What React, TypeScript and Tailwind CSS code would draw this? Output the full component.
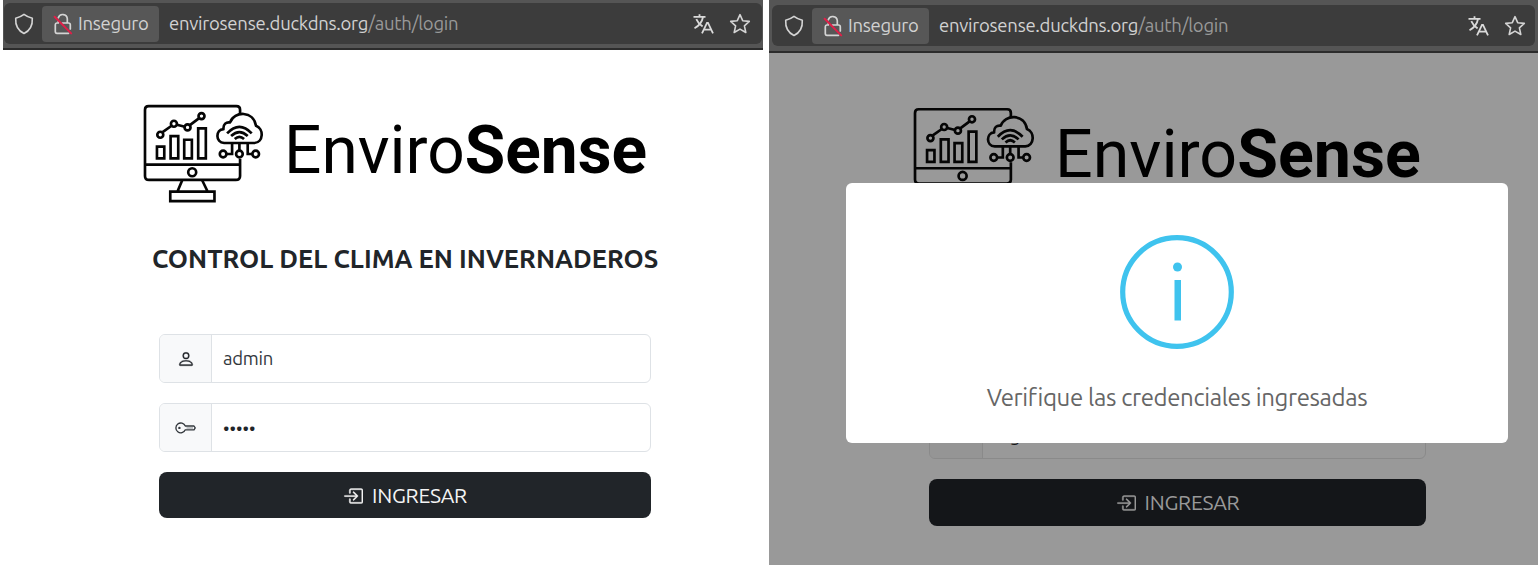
import React from "react";
import { BsPerson, BsBoxArrowInRight } from "react-icons/bs";

const ubuntu = "font-['Ubuntu','Noto_Sans',sans-serif]";

function Shield() {
  return (
    <svg viewBox="0 0 20 22" className="h-[22px] w-5 shrink-0" fill="none" stroke="#d4d4d4" strokeWidth="1.6" strokeLinejoin="round">
      <path d="M10 1.300C8 2.800 5 4.400 1.700 5.200C1.300 11.500 3.600 17.300 10 20.500C16.400 17.300 18.700 11.500 18.300 5.200C15 4.400 12 2.800 10 1.300Z" />
    </svg>
  );
}

function BrokenLock() {
  return (
    <svg viewBox="0 0 20 22" className="h-[22px] w-5 shrink-0" fill="none" strokeLinecap="round">
      <path d="M5.300 4.800A4.600 4.600 0 0 1 14.300 5.800V10M9.500 10H15.500Q17.300 10 17.300 11.800V16M3.800 10Q2.300 10.200 2.300 11.800V18.600Q2.300 20.300 4 20.300H15.500M5.300 10V8" stroke="#d4d4d4" strokeWidth="1.700" />
      <path d="M1.600 3.800L18.200 20.400" stroke="#e01f48" strokeWidth="2" />
    </svg>
  );
}

function Translate() {
  return (
    <svg viewBox="0 0 21 20" className="mr-[15px] h-5 w-[21px] shrink-0" fill="none" stroke="#dadada" strokeWidth="1.800">
      <path d="M0.500 2.900H12.500M6.500 0.300V2.900M10 3C9.200 7.500 6 11.800 1.500 14.300M3.300 5.200C4.600 8.300 7 10.900 9.600 12.400" />
      <path d="M9 19.300L14 8.900H15L20 19.300M11 15.700H18" />
    </svg>
  );
}

function Star() {
  return (
    <svg viewBox="0 0 22 22" className="h-[22px] w-[22px] shrink-0" fill="none" stroke="#d4d4d4" strokeWidth="1.600" strokeLinejoin="round">
      <path d="M11 1.700L13.700 7.700L20.300 8.400L15.400 12.800L16.800 19.500L11 16.100L5.200 19.500L6.600 12.800L1.700 8.400L8.300 7.700Z" />
    </svg>
  );
}

function Key() {
  return (
    <svg viewBox="0 0 21 12" className="h-3 w-[21px] shrink-0" fill="none" stroke="#33383d" strokeWidth="1.350" strokeLinejoin="round">
      <path d="M10.300 4H19L20.200 5.900L19 7.800H10.300A4.900 4.900 0 1 1 10.300 4Z" />
      <path d="M11.500 6H18" strokeWidth="1" stroke="#8b8f93" />
      <circle cx="4.400" cy="5.900" r="1.200" fill="#33383d" stroke="none" />
    </svg>
  );
}

function AddressBar({ className, field }: { className: string; field: string }) {
  return (
    <div className={`w-full border-b-2 border-[#2c2c2c] bg-[#555555] ${className}`}>
      <div className={`flex items-center rounded-md bg-[#3c3c3c] ${field} ${ubuntu}`}>
        <Shield />
        <div className="ml-2 flex h-[36px] w-[117px] shrink-0 items-center rounded bg-[#575757] pl-[11px]">
          <BrokenLock />
          <span className="ml-[5px] text-[18.5px] tracking-[-0.25px] text-[#d2d2d2]">Inseguro</span>
        </div>
        <div className="ml-[10px] grow whitespace-nowrap text-[18.5px] tracking-[-0.25px] text-[#d2d2d2]">
          envirosense.duckdns.org<span className="text-[#999999]">/auth/login</span>
        </div>
        <Translate />
        <Star />
      </div>
    </div>
  );
}

function MonitorLogo({ className }: { className: string }) {
  return (
    <svg viewBox="39 42 364 297" className={className} fill="none" stroke="#050505" strokeWidth="8">
      <path d="M331 72V59Q331 48 320 48H56Q45 48 45 59V258Q45 270 57 270H318Q331 270 331 258V206M45 224H331" />
      <circle cx="187" cy="247" r="12" />
      <path d="M157 271L143 304M217 271L233 304M121 305H254V334H121Z" />
      <path d="M81 170H103V205H81ZM122 138H145V205H122ZM163 149H186V205H163ZM205 115H228V205H205Z" />
      <path d="M98 126L125 107M141 104L165 110M180 105L208 84" />
      <circle cx="91" cy="134" r="9" />
      <circle cx="132" cy="101" r="9" />
      <circle cx="173" cy="112" r="9" />
      <circle cx="215" cy="78" r="9" />
      <path d="M283 159C256 157 257 119 281 117C280 102 289 95 301 97C313 62 372 61 379 107C403 116 402 157 374 159Z" strokeLinejoin="round" />
      <path d="M292 130Q329 91 366 130M304 138Q329 114 354 138M315 147Q329 134 343 147" />
      <path d="M329 160V181M307 160V192H290M354 160V192H368" />
      <circle cx="280" cy="192" r="10" />
      <circle cx="329" cy="192" r="10" />
      <circle cx="378" cy="192" r="10" />
    </svg>
  );
}

function Brand({ className, icon, text }: { className: string; icon: string; text: string }) {
  return (
    <div className={`flex ${className}`}>
      <MonitorLogo className={`shrink-0 ${icon}`} />
      <div className={`whitespace-nowrap font-['Roboto',sans-serif] text-black ${text}`}>
        Enviro<span className="font-bold">Sense</span>
      </div>
    </div>
  );
}

function Field({ className, icon, children }: { className: string; icon: React.ReactNode; children: React.ReactNode }) {
  return (
    <div className={`flex overflow-hidden rounded-md border ${className}`}>
      <div className="flex w-[52px] shrink-0 items-center justify-center border-r border-inherit bg-[#f8f9fa] text-[#212529]">{icon}</div>
      <div className="flex grow items-center pl-[11px] text-[18.5px] tracking-[-0.25px]">{children}</div>
    </div>
  );
}

function SubmitButton({ className }: { className: string }) {
  return (
    <button type="button" className={`mt-5 flex w-full items-center justify-center gap-[9px] rounded-lg text-[21px] ${className}`}>
      <BsBoxArrowInRight className="h-5 w-5 stroke-current stroke-[0.3]" />
      <span className="tracking-[-0.250px]">INGRESAR</span>
    </button>
  );
}

function LoginView() {
  return (
    <section className="ml-[3px] flex h-[568px] w-[760px] flex-col bg-white">
      <AddressBar className="h-[50px] px-px pt-[3px]" field="h-[41px] pl-[10px] pr-[11px]" />
      <div className={`pl-[140px] pt-[54px] ${ubuntu}`}>
        <Brand className="h-[100px]" icon="h-[99px] w-[121px]" text="ml-[20px] mt-[14px] text-[65.8px] leading-[66px]" />
        <h1 className="ml-[9px] mt-[35px] whitespace-nowrap text-[25.65px] font-semibold leading-[40px] text-[#212529]">
          CONTROL DEL CLIMA EN INVERNADEROS
        </h1>
        <form className="ml-4 mt-[55px] w-[492px]">
          <Field className="h-[49px] border-[#dee2e6] text-[#33383d]" icon={<BsPerson className="h-[18px] w-[18px] stroke-current stroke-[0.3]" />}>
            admin
          </Field>
          <Field className="mt-5 h-[49px] border-[#dee2e6] text-[#212529]" icon={<Key />}>
            <span className="pt-px text-[18px] tracking-normal">•••••</span>
          </Field>
          <SubmitButton className="h-[46px] bg-[#212529] pt-px text-[#f4f4f4]" />
        </form>
      </div>
    </section>
  );
}

function RejectedView() {
  return (
    <section className="relative ml-[6px] flex h-[565px] w-[769px] flex-col bg-[#999999]">
      <AddressBar className="h-[53px] px-[3px] pt-[5px]" field="h-[41px] pl-[12px] pr-[9px]" />
      <div className={`pl-[144px] pt-[54px] ${ubuntu}`}>
        <Brand className="h-[100px]" icon="h-[100px] w-[122px]" text="ml-[20px] mt-[14px] text-[66.300px] leading-[66px]" />
        <div className="ml-4 mt-[202px] w-[497px]">
          <Field className="h-[50px] border-[#8a8a8a] text-[#141619] *:first:w-[53px] *:first:bg-[#959595]" icon={null}>
            <span className="pt-1">mg</span>
          </Field>
          <SubmitButton className="h-[47px] bg-[#141619] text-[#999999]" />
        </div>
      </div>
      <div role="dialog" className={`absolute left-[77px] top-[183px] flex h-[260px] w-[662px] flex-col items-center rounded-md bg-white pt-[52px] ${ubuntu}`}>
        <svg viewBox="0 0 114 114" className="h-[114px] w-[114px]">
          <circle cx="57" cy="57" r="54.300" fill="none" stroke="#3fc3ee" strokeWidth="5.200" />
          <circle cx="57.500" cy="32" r="4.500" fill="#3fc3ee" />
          <rect x="54.500" y="45" width="6.500" height="40.500" fill="#3fc3ee" />
        </svg>
        <p className="mt-[33px] whitespace-nowrap text-[24px] leading-8 tracking-[-0.360px] text-[#666666]">Verifique las credenciales ingresadas</p>
      </div>
    </section>
  );
}

export default function App() {
  return (
    <main className="flex h-[568px] w-[1540px] overflow-hidden bg-white">
      <LoginView />
      <RejectedView />
    </main>
  );
}
